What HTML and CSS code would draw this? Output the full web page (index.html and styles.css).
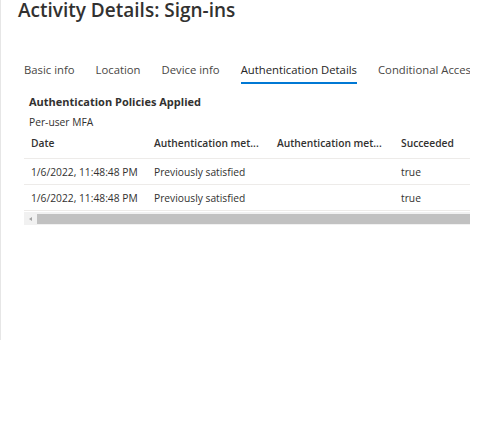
FILE: index.html
```html
<!DOCTYPE html>
<html>
<head>
<meta charset="utf-8">
<link rel="stylesheet" href="styles.css">
</head>
<body>
<div class="page">
  <div class="blade">
    <h1 class="title">Activity Details: Sign-ins</h1>
    <nav class="tabs">
      <span class="tab">Basic info</span>
      <span class="tab">Location</span>
      <span class="tab">Device info</span>
      <span class="tab active">Authentication Details</span>
      <span class="tab">Conditional Access</span>
    </nav>
    <div class="content">
      <div class="section-title">Authentication Policies Applied</div>
      <div class="policy">Per-user MFA</div>
      <div class="grid">
        <div class="row head">
          <div class="c c1">Date</div>
          <div class="c c2">Authentication met...</div>
          <div class="c c3">Authentication met...</div>
          <div class="c c4">Succeeded</div>
        </div>
        <div class="row">
          <div class="c c1">1/6/2022, 11:48:48 PM</div>
          <div class="c c2">Previously satisfied</div>
          <div class="c c3"></div>
          <div class="c c4">true</div>
        </div>
        <div class="row">
          <div class="c c1">1/6/2022, 11:48:48 PM</div>
          <div class="c c2">Previously satisfied</div>
          <div class="c c3"></div>
          <div class="c c4">true</div>
        </div>
        <div class="scrollbar">
          <span class="arrow"></span>
          <span class="thumb"></span>
        </div>
      </div>
    </div>
  </div>
</div>
</body>
</html>
```
FILE: styles.css
```css
html, body {
  margin: 0;
  padding: 0;
  background: #fff;
}
body {
  font-family: "Open Sans", "Noto Sans", sans-serif;
  color: #323130;
  width: 504px;
  height: 436px;
  overflow: hidden;
}
.page {
  width: 470px;
  overflow: hidden;
}
.blade {
  border-left: 1px solid #e6e6e6;
  height: 340px;
  box-sizing: border-box;
  padding-left: 17px;
}
.title {
  margin: 0;
  font-size: 19px;
  font-weight: 600;
  line-height: 20px;
  color: #323130;
  white-space: nowrap;
}
.tabs {
  display: flex;
  gap: 21px;
  margin-top: 42px;
  padding-left: 6px;
  white-space: nowrap;
  font-size: 11.3px;
}
.tab {
  line-height: 16px;
  padding-bottom: 4px;
  color: #484644;
  border-bottom: 2px solid transparent;
}
.tab.active {
  color: #252423;
  border-bottom-color: #0078d4;
}
.content {
  padding-left: 6px;
  margin-top: 10px;
}
.section-title {
  font-weight: 700;
  font-size: 11px;
  line-height: 16px;
  padding-left: 5px;
  white-space: nowrap;
}
.policy {
  font-size: 10.25px;
  line-height: 16px;
  margin-top: 4px;
  padding-left: 5px;
}
.grid {
  margin-top: 2px;
  width: 470px;
  font-size: 10.25px;
}
.row {
  display: flex;
  box-sizing: border-box;
  height: 26px;
  padding-top: 1px;
  line-height: 24px;
  border-bottom: 1px solid #edebe9;
  white-space: nowrap;
}
.row.head {
  height: 27px;
  padding-top: 0;
  line-height: 22px;
  font-weight: 600;
}
.c {
  padding-left: 7px;
  box-sizing: border-box;
  overflow: hidden;
}
.c1 { width: 123px; }
.c2 { width: 123px; }
.c3 { width: 124px; }
.c4 { width: 100px; }
.scrollbar {
  display: flex;
  align-items: center;
  height: 13px;
  background: #f1f1f1;
  margin-top: 1px;
}
.arrow {
  width: 0;
  height: 0;
  border-top: 2.5px solid transparent;
  border-bottom: 2.5px solid transparent;
  border-right: 3px solid #a3a3a3;
  margin-left: 5px;
  margin-right: 5px;
}
.thumb {
  flex: 1;
  height: 10px;
  background: #c1c1c1;
}
```
